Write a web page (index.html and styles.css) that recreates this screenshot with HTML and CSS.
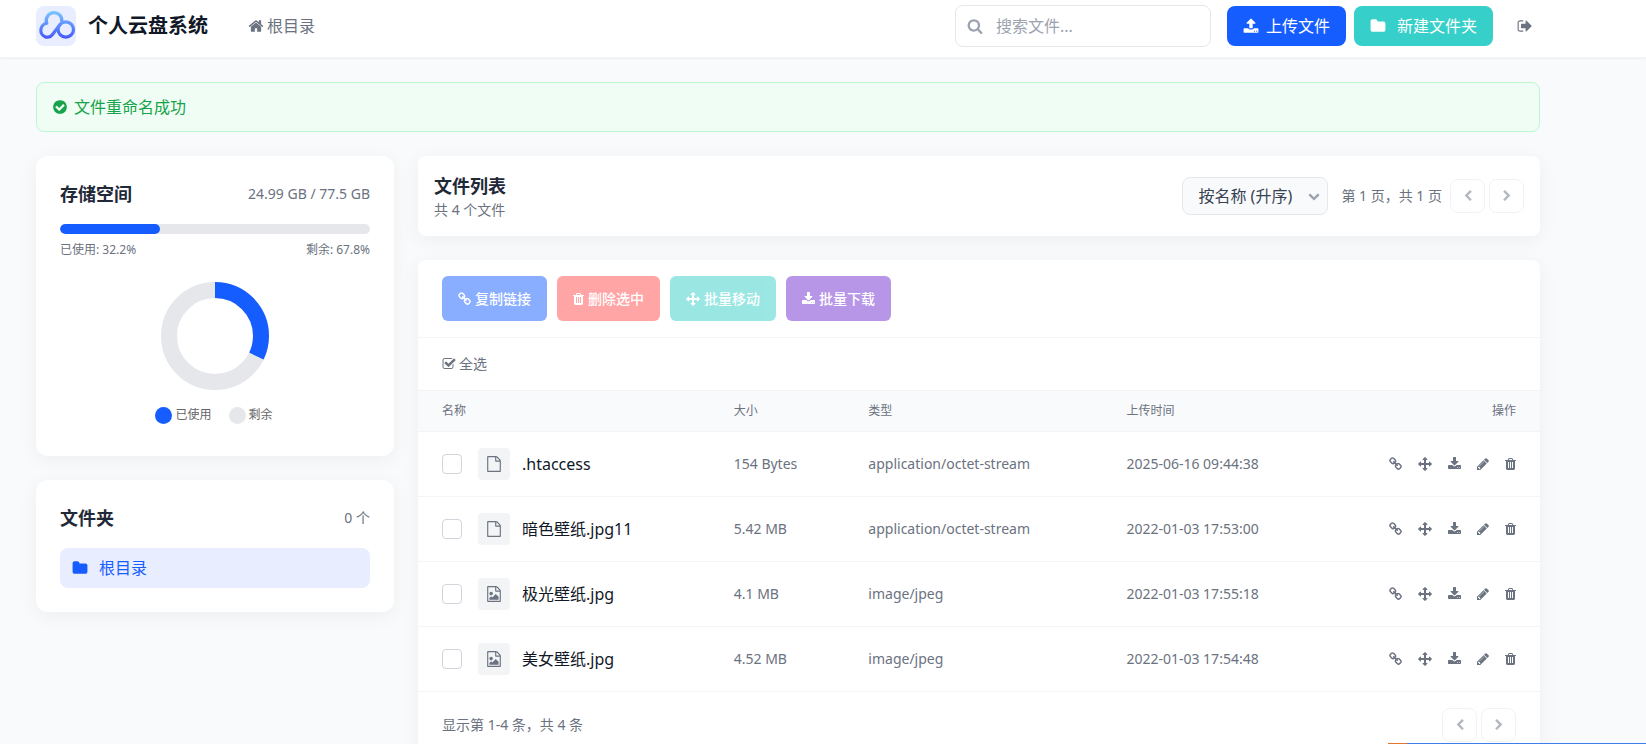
FILE: index.html
```html
<!DOCTYPE html>
<html lang="zh-CN">
<head>
    <meta charset="UTF-8">
    <meta name="viewport" content="width=device-width, initial-scale=1.0">
    <title>个人云盘系统</title>
    <link rel="stylesheet" href="styles.css">
</head>
<body>
    <!-- 图标 -->
    <svg class="sprite" aria-hidden="true">
        <symbol id="home" viewBox="0 0 1792 1792"><path d="M1472 992v480q0 26-19 45t-45 19h-384v-384h-256v384h-384q-26 0-45-19t-19-45v-480q0-1 .5-3t.5-3l575-474 575 474q1 2 1 6zm223-69l-62 74q-8 9-21 11h-3q-13 0-21-7l-692-577-692 577q-12 8-24 7-13-2-21-11l-62-74q-8-10-7-23.500t11-21.500l719-599q32-26 76-26t76 26l244 204v-195q0-14 9-23t23-9h192q14 0 23 9t9 23v408l219 182q10 8 11 21.500t-7 23.500z"/></symbol>
        <symbol id="search" viewBox="0 0 1792 1792"><path d="M1216 832q0-185-131.500-316.500t-316.500-131.500-316.500 131.500-131.500 316.500 131.500 316.500 316.500 131.500 316.500-131.500 131.500-316.500zm512 832q0 52-38 90t-90 38q-54 0-90-38l-343-342q-179 124-399 124-143 0-273.500-55.500t-225-150-150-225-55.500-273.500 55.500-273.500 150-225 225-150 273.500-55.500 273.500 55.500 225 150 150 225 55.500 273.500q0 220-124 399l343 343q37 37 37 90z"/></symbol>
        <symbol id="upload" viewBox="0 0 1792 1792"><path d="M1344 1472q0-26-19-45t-45-19-45 19-19 45 19 45 45 19 45-19 19-45zm256 0q0-26-19-45t-45-19-45 19-19 45 19 45 45 19 45-19 19-45zm128-224v320q0 40-28 68t-68 28h-1472q-40 0-68-28t-28-68v-320q0-40 28-68t68-28h427q21 56 70.500 92t110.500 36h256q61 0 110.500-36t70.500-92h427q40 0 68 28t28 68zm-325-648q-17 40-59 40h-256v448q0 26-19 45t-45 19h-256q-26 0-45-19t-19-45v-448h-256q-42 0-59-40-17-39 14-69l448-448q18-19 45-19t45 19l448 448q31 30 14 69z"/></symbol>
        <symbol id="download" viewBox="0 0 1792 1792" preserveAspectRatio="xMidYMid slice"><path d="M1344 1344q0-26-19-45t-45-19-45 19-19 45 19 45 45 19 45-19 19-45zm256 0q0-26-19-45t-45-19-45 19-19 45 19 45 45 19 45-19 19-45zm128-224v320q0 40-28 68t-68 28h-1472q-40 0-68-28t-28-68v-320q0-40 28-68t68-28h465l135 136q58 56 136 56t136-56l136-136h464q40 0 68 28t28 68zm-325-569q17 41-14 70l-448 448q-18 19-45 19t-45-19l-448-448q-31-29-14-70 17-39 59-39h256v-448q0-26 19-45t45-19h256q26 0 45 19t19 45v448h256q42 0 59 39z"/></symbol>
        <symbol id="folder" viewBox="0 0 1792 1792"><path d="M1728 608v704q0 92-66 158t-158 66h-1216q-92 0-158-66t-66-158v-960q0-92 66-158t158-66h320q92 0 158 66t66 158v32h672q92 0 158 66t66 158z"/></symbol>
        <symbol id="sign-out" viewBox="0 0 1792 1792"><path d="M704 1440q0 4 1 20t.5 26.500-3 23.500-10 19.500-20.500 6.500h-320q-119 0-203.500-84.500t-84.500-203.500v-704q0-119 84.500-203.500t203.500-84.500h320q13 0 22.500 9.500t9.500 22.500q0 4 1 20t.5 26.500-3 23.500-10 19.500-20.500 6.500h-320q-66 0-113 47t-47 113v704q0 66 47 113t113 47h312l11.500 1 11.500 3 8 5.500 7 9 2 13.500zm928-544q0 26-19 45l-544 544q-19 19-45 19t-45-19-19-45v-288h-448q-26 0-45-19t-19-45v-384q0-26 19-45t45-19h448v-288q0-26 19-45t45-19 45 19l544 544q19 19 19 45z"/></symbol>
        <symbol id="check-circle" viewBox="0 0 1792 1792"><path d="M1412 734q0-28-18-46l-91-90q-19-19-45-19t-45 19l-408 407-226-226q-19-19-45-19t-45 19l-91 90q-18 18-18 46 0 27 18 45l362 362q19 19 45 19 27 0 46-19l543-543q18-18 18-45zm252 162q0 209-103 385.500t-279.500 279.500-385.500 103-385.500-103-279.500-279.500-103-385.500 103-385.500 279.500-279.500 385.500-103 385.500 103 279.500 279.500 103 385.500z"/></symbol>
        <symbol id="link" viewBox="0 0 1792 1792" preserveAspectRatio="xMidYMid slice"><path d="M1520 1216q0-40-28-68l-208-208q-28-28-68-28-42 0-72 32 3 3 19 18.500t21.500 21.500 15 19 13 25.500 3.500 27.500q0 40-28 68t-68 28q-15 0-27.500-3.500t-25.500-13-19-15-21.500-21.500-18.500-19q-33 31-33 73 0 40 28 68l206 207q27 27 68 27 40 0 68-26l147-146q28-28 28-67zm-703-705q0-40-28-68l-206-207q-28-28-68-28-39 0-68 27l-147 146q-28 28-28 67 0 40 28 68l208 208q27 27 68 27 42 0 72-31-3-3-19-18.500t-21.500-21.500-15-19-13-25.500-3.500-27.500q0-40 28-68t68-28q15 0 27.500 3.500t25.500 13 19 15 21.500 21.500 18.500 19q33-31 33-73zm895 705q0 120-85 203l-147 146q-83 83-203 83-121 0-204-85l-206-207q-83-83-83-203 0-123 88-209l-88-88q-86 88-208 88-120 0-204-84l-208-208q-84-84-84-204t85-203l147-146q83-83 203-83 121 0 204 85l206 207q83 83 83 203 0 123-88 209l88 88q86-88 208-88 120 0 204 84l208 208q84 84 84 204z"/></symbol>
        <symbol id="trash" viewBox="0 0 1792 1792" preserveAspectRatio="xMidYMid slice"><path d="M704 1376v-704q0-14-9-23t-23-9h-64q-14 0-23 9t-9 23v704q0 14 9 23t23 9h64q14 0 23-9t9-23zm256 0v-704q0-14-9-23t-23-9h-64q-14 0-23 9t-9 23v704q0 14 9 23t23 9h64q14 0 23-9t9-23zm256 0v-704q0-14-9-23t-23-9h-64q-14 0-23 9t-9 23v704q0 14 9 23t23 9h64q14 0 23-9t9-23zm-544-992h448l-48-117q-7-9-17-11h-317q-10 2-17 11zm928 32v64q0 14-9 23t-23 9h-96v948q0 83-47 143.500t-113 60.500h-832q-66 0-113-58.500t-47-141.500v-952h-96q-14 0-23-9t-9-23v-64q0-14 9-23t23-9h309l70-167q15-37 54-63t79-26h320q40 0 79 26t54 63l70 167h309q14 0 23 9t9 23z"/></symbol>
        <symbol id="arrows" viewBox="0 0 1792 1792"><path d="M1792 896q0 26-19 45l-256 256q-19 19-45 19t-45-19-19-45v-128h-384v384h128q26 0 45 19t19 45-19 45l-256 256q-19 19-45 19t-45-19l-256-256q-19-19-19-45t19-45 45-19h128v-384h-384v128q0 26-19 45t-45 19-45-19l-256-256q-19-19-19-45t19-45l256-256q19-19 45-19t45 19 19 45v128h384v-384h-128q-26 0-45-19t-19-45 19-45l256-256q19-19 45-19t45 19l256 256q19 19 19 45t-19 45-45 19h-128v384h384v-128q0-26 19-45t45-19 45 19l256 256q19 19 19 45z"/></symbol>
        <symbol id="pencil" viewBox="0 0 1792 1792" preserveAspectRatio="xMidYMid slice"><path d="M491 1536l91-91-235-235-91 91v107h128v128h107zm523-928q0-22-22-22-10 0-17 7l-542 542q-7 7-7 17 0 22 22 22 10 0 17-7l542-542q7-7 7-17zm-54-192l416 416-832 832h-416v-416zm683 96q0 53-37 90l-166 166-416-416 166-165q36-38 90-38 53 0 91 38l235 234q37 39 37 91z"/></symbol>
        <symbol id="file" viewBox="0 0 1792 1792"><path d="M1596 380q28 28 48 76t20 88v1152q0 40-28 68t-68 28h-1344q-40 0-68-28t-28-68v-1600q0-40 28-68t68-28h896q40 0 88 20t76 48zm-444-244v376h376q-10-29-22-41l-313-313q-12-12-41-22zm384 1528v-1024h-416q-40 0-68-28t-28-68v-416h-768v1536h1280z"/></symbol>
        <symbol id="file-image" viewBox="0 0 1792 1792"><path d="M1596 380q28 28 48 76t20 88v1152q0 40-28 68t-68 28h-1344q-40 0-68-28t-28-68v-1600q0-40 28-68t68-28h896q40 0 88 20t76 48zm-444-244v376h376q-10-29-22-41l-313-313q-12-12-41-22zm384 1528v-1024h-416q-40 0-68-28t-28-68v-416h-768v1536h1280zm-128-448v320h-1024v-192l192-192 128 128 384-384zm-832-192q-80 0-136-56t-56-136 56-136 136-56 136 56 56 136-56 136-136 56z"/></symbol>
        <symbol id="check-square" viewBox="0 0 1792 1792"><path d="M1472 930v318q0 119-84.500 203.500t-203.500 84.500h-832q-119 0-203.500-84.500t-84.500-203.500v-832q0-119 84.500-203.500t203.500-84.500h832q63 0 117 25 15 7 18 23 3 17-9 29l-49 49q-10 10-23 10-3 0-9-2-23-6-45-6h-832q-66 0-113 47t-47 113v832q0 66 47 113t113 47h832q66 0 113-47t47-113v-254q0-13 9-22l64-64q10-10 23-10 6 0 12 3 20 8 20 29zm231-489l-814 814q-24 24-57 24t-57-24l-430-430q-24-24-24-57t24-57l110-110q24-24 57-24t57 24l263 263 647-647q24-24 57-24t57 24l110 110q24 24 24 57t-24 57z"/></symbol>
        <symbol id="chevron-left" viewBox="0 0 1792 1792"><path d="M1427 301l-531 531 531 531q19 19 19 45t-19 45l-166 166q-19 19-45 19t-45-19l-742-742q-19-19-19-45t19-45l742-742q19-19 45-19t45 19l166 166q19 19 19 45t-19 45z"/></symbol>
        <symbol id="chevron-right" viewBox="0 0 1792 1792"><path d="M1363 877l-742 742q-19 19-45 19t-45-19l-166-166q-19-19-19-45t19-45l531-531-531-531q-19-19-19-45t19-45l166-166q19-19 45-19t45 19l742 742q19 19 19 45t-19 45z"/></symbol>
        <symbol id="chevron-down" viewBox="0 0 1792 1792"><path d="M1683 808l-742 741q-19 19-45 19t-45-19l-742-741q-19-19-19-45.500t19-45.500l166-165q19-19 45-19t45 19l531 531 531-531q19-19 45-19t45 19l166 165q19 19 19 45.500t-19 45.500z"/></symbol>
    </svg>

    <header class="header">
        <div class="container header-inner">
            <div class="brand">
                <svg class="logo" viewBox="0 0 40 40" aria-hidden="true">
                    <defs>
                        <linearGradient id="logo-fill" gradientUnits="userSpaceOnUse" x1="0" y1="5" x2="0" y2="33">
                            <stop offset="0" stop-color="#7cc8ff"/>
                            <stop offset="1" stop-color="#4355f9"/>
                        </linearGradient>
                    </defs>
                    <g fill="none" stroke="url(#logo-fill)" stroke-width="3.200" stroke-linecap="round" stroke-linejoin="round">
                        <path d="M24 18.500L16.500 28.500Q14.500 31.200 12 31.200H10A7.200 7.200 0 0 1 10.800 17.200A7.800 7.800 0 1 1 25.800 15.500"/>
                        <circle cx="29.800" cy="23.500" r="7.700"/>
                    </g>
                </svg>
                <h1>个人云盘系统</h1>
            </div>
            <nav class="nav">
                <a href="#"><svg class="icon"><use href="#home"/></svg>根目录</a>
            </nav>
            <div class="header-actions">
                <div class="search">
                    <svg class="icon"><use href="#search"/></svg>
                    <input type="text" placeholder="搜索文件..." aria-label="搜索文件">
                </div>
                <button class="btn btn-upload"><svg class="icon"><use href="#upload"/></svg>上传文件</button>
                <button class="btn btn-folder"><svg class="icon"><use href="#folder"/></svg>新建文件夹</button>
                <a class="logout" href="#" aria-label="退出"><svg class="icon"><use href="#sign-out"/></svg></a>
            </div>
        </div>
    </header>

    <main class="container">
        <div class="alert"><svg class="icon"><use href="#check-circle"/></svg>文件重命名成功</div>

        <div class="layout">
            <aside class="sidebar">
                <section class="card side-card">
                    <div class="card-head">
                        <h2>存储空间</h2>
                        <span>24.99 GB / 77.5 GB</span>
                    </div>
                    <div class="progress"><div class="progress-bar" style="width: 32.2%"></div></div>
                    <div class="usage">
                        <span>已使用: 32.2%</span>
                        <span>剩余: 67.8%</span>
                    </div>
                    <svg class="donut" viewBox="0 0 108 108" aria-hidden="true">
                        <circle cx="54" cy="54" r="46" fill="none" stroke="#e5e7eb" stroke-width="16"/>
                        <circle cx="54" cy="54" r="46" fill="none" stroke="#165dff" stroke-width="16" pathLength="100" stroke-dasharray="32.2 67.8" transform="rotate(-90 54 54)"/>
                    </svg>
                    <div class="legend">
                        <span><i class="dot dot-used"></i>已使用</span>
                        <span><i class="dot dot-free"></i>剩余</span>
                    </div>
                </section>

                <section class="card side-card">
                    <div class="card-head">
                        <h2>文件夹</h2>
                        <span>0 个</span>
                    </div>
                    <a class="folder-item" href="#"><svg class="icon"><use href="#folder"/></svg>根目录</a>
                </section>
            </aside>

            <div class="content">
                <section class="card list-head">
                    <div>
                        <h2>文件列表</h2>
                        <p>共 4 个文件</p>
                    </div>
                    <div class="list-tools">
                        <div class="sort">
                            <select aria-label="排序方式">
                                <option>按名称 (升序)</option>
                                <option>按名称 (降序)</option>
                            </select>
                            <svg class="icon"><use href="#chevron-down"/></svg>
                        </div>
                        <span class="page-info">第 1 页，共 1 页</span>
                        <div class="pager">
                            <button disabled aria-label="上一页"><svg class="icon"><use href="#chevron-left"/></svg></button>
                            <button disabled aria-label="下一页"><svg class="icon"><use href="#chevron-right"/></svg></button>
                        </div>
                    </div>
                </section>

                <section class="card files">
                    <div class="toolbar">
                        <button class="batch batch-copy" disabled><svg class="icon i-13"><use href="#link"/></svg>复制链接</button>
                        <button class="batch batch-delete" disabled><svg class="icon i-11"><use href="#trash"/></svg>删除选中</button>
                        <button class="batch batch-move" disabled><svg class="icon"><use href="#arrows"/></svg>批量移动</button>
                        <button class="batch batch-download" disabled><svg class="icon i-13"><use href="#download"/></svg>批量下载</button>
                    </div>
                    <div class="select-all">
                        <button><svg class="icon"><use href="#check-square"/></svg>全选</button>
                    </div>
                    <table class="file-table">
                        <thead>
                            <tr>
                                <th class="col-name">名称</th>
                                <th class="col-size">大小</th>
                                <th class="col-type">类型</th>
                                <th>上传时间</th>
                                <th class="col-actions">操作</th>
                            </tr>
                        </thead>
                        <tbody>
                            <tr>
                                <td>
                                    <label class="file-name">
                                        <input type="checkbox">
                                        <span class="file-icon"><svg class="icon"><use href="#file"/></svg></span>
                                        .htaccess
                                    </label>
                                </td>
                                <td>154 Bytes</td>
                                <td>application/octet-stream</td>
                                <td>2025-06-16 09:44:38</td>
                                <td>
                                    <div class="row-actions">
                                        <button aria-label="复制链接"><svg class="icon i-13"><use href="#link"/></svg></button>
                                        <button aria-label="移动"><svg class="icon"><use href="#arrows"/></svg></button>
                                        <button aria-label="下载"><svg class="icon i-13"><use href="#download"/></svg></button>
                                        <button aria-label="重命名"><svg class="icon i-12"><use href="#pencil"/></svg></button>
                                        <button aria-label="删除"><svg class="icon i-11"><use href="#trash"/></svg></button>
                                    </div>
                                </td>
                            </tr>
                            <tr>
                                <td>
                                    <label class="file-name">
                                        <input type="checkbox">
                                        <span class="file-icon"><svg class="icon"><use href="#file"/></svg></span>
                                        暗色壁纸.jpg11
                                    </label>
                                </td>
                                <td>5.42 MB</td>
                                <td>application/octet-stream</td>
                                <td>2022-01-03 17:53:00</td>
                                <td>
                                    <div class="row-actions">
                                        <button aria-label="复制链接"><svg class="icon i-13"><use href="#link"/></svg></button>
                                        <button aria-label="移动"><svg class="icon"><use href="#arrows"/></svg></button>
                                        <button aria-label="下载"><svg class="icon i-13"><use href="#download"/></svg></button>
                                        <button aria-label="重命名"><svg class="icon i-12"><use href="#pencil"/></svg></button>
                                        <button aria-label="删除"><svg class="icon i-11"><use href="#trash"/></svg></button>
                                    </div>
                                </td>
                            </tr>
                            <tr>
                                <td>
                                    <label class="file-name">
                                        <input type="checkbox">
                                        <span class="file-icon"><svg class="icon"><use href="#file-image"/></svg></span>
                                        极光壁纸.jpg
                                    </label>
                                </td>
                                <td>4.1 MB</td>
                                <td>image/jpeg</td>
                                <td>2022-01-03 17:55:18</td>
                                <td>
                                    <div class="row-actions">
                                        <button aria-label="复制链接"><svg class="icon i-13"><use href="#link"/></svg></button>
                                        <button aria-label="移动"><svg class="icon"><use href="#arrows"/></svg></button>
                                        <button aria-label="下载"><svg class="icon i-13"><use href="#download"/></svg></button>
                                        <button aria-label="重命名"><svg class="icon i-12"><use href="#pencil"/></svg></button>
                                        <button aria-label="删除"><svg class="icon i-11"><use href="#trash"/></svg></button>
                                    </div>
                                </td>
                            </tr>
                            <tr>
                                <td>
                                    <label class="file-name">
                                        <input type="checkbox">
                                        <span class="file-icon"><svg class="icon"><use href="#file-image"/></svg></span>
                                        美女壁纸.jpg
                                    </label>
                                </td>
                                <td>4.52 MB</td>
                                <td>image/jpeg</td>
                                <td>2022-01-03 17:54:48</td>
                                <td>
                                    <div class="row-actions">
                                        <button aria-label="复制链接"><svg class="icon i-13"><use href="#link"/></svg></button>
                                        <button aria-label="移动"><svg class="icon"><use href="#arrows"/></svg></button>
                                        <button aria-label="下载"><svg class="icon i-13"><use href="#download"/></svg></button>
                                        <button aria-label="重命名"><svg class="icon i-12"><use href="#pencil"/></svg></button>
                                        <button aria-label="删除"><svg class="icon i-11"><use href="#trash"/></svg></button>
                                    </div>
                                </td>
                            </tr>
                        </tbody>
                    </table>
                    <div class="list-foot">
                        <span>显示第 1-4 条，共 4 条</span>
                        <div class="pager">
                            <button disabled aria-label="上一页"><svg class="icon"><use href="#chevron-left"/></svg></button>
                            <button disabled aria-label="下一页"><svg class="icon"><use href="#chevron-right"/></svg></button>
                        </div>
                    </div>
                </section>
            </div>
        </div>
    </main>

    <div class="dock-edge"></div>
</body>
</html>
```
FILE: styles.css
```css
* {
    box-sizing: border-box;
}

body {
    margin: 0;
    padding-bottom: 24px;
    background: #f9fafc;
    color: #111827;
    font-family: "Noto Sans", "Noto Sans CJK SC", sans-serif;
    font-size: 16px;
    line-height: 24px;
}

h1, h2, p {
    margin: 0;
}

h2 {
    font-size: 18px;
    line-height: 28px;
    font-weight: 700;
    color: #1f2937;
}

a {
    color: inherit;
    text-decoration: none;
}

button, input, select {
    font: inherit;
    color: inherit;
}

button {
    padding: 0;
    border: none;
    background: none;
    cursor: pointer;
}

button:disabled {
    opacity: 0.5;
    cursor: not-allowed;
}

.sprite {
    display: none;
}

.icon {
    width: 1em;
    height: 1em;
    flex-shrink: 0;
    fill: currentColor;
}

/* narrow glyphs in the 14px rows */
.i-11 {
    width: 11px;
}

.i-12 {
    width: 12px;
}

.i-13 {
    width: 13px;
}

.header {
    padding-right: 70px;
    background: #fff;
    border-bottom: 1px solid #f3f4f6;
    box-shadow: 0 1px 2px rgba(0, 0, 0, 0.05);
}

.header-inner {
    max-width: 1536px;
    margin: 0 auto;
    padding: 5px 16px 10px;
    display: flex;
    align-items: center;
}

.brand {
    display: flex;
    align-items: center;
    gap: 12px;
}

.brand h1 {
    font-size: 20px;
    line-height: 28px;
    font-weight: 700;
}

.logo {
    width: 40px;
    height: 40px;
    border-radius: 8px;
    background: #e8eeff;
}

.nav {
    margin-left: 40px;
    color: #6b7280;
}

.nav a {
    display: flex;
    align-items: center;
    gap: 3px;
}

.header-actions {
    margin-left: auto;
    display: flex;
    align-items: center;
}

.search {
    position: relative;
    display: flex;
    align-items: center;
    margin-right: 16px;
}

.search input {
    width: 256px;
    height: 42px;
    padding: 0 16px 0 40px;
    border: 1px solid #e5e7eb;
    border-radius: 8px;
    background: #fff;
    outline: none;
}

.search input::placeholder {
    color: #9ca3af;
    opacity: 1;
}

.search .icon {
    position: absolute;
    left: 12px;
    color: #9ca3af;
}

.btn {
    display: flex;
    align-items: center;
    height: 40px;
    padding: 0 16px;
    border-radius: 8px;
    color: #fff;
}

.btn-upload {
    gap: 7px;
    margin-right: 8px;
    background: #165dff;
}

.btn-folder {
    gap: 11px;
    background: #36cfc9;
}

.logout {
    display: flex;
    margin-left: 16px;
    padding: 8px 7px 8px 8px;
    color: #6b7280;
}

main.container {
    max-width: 1606px;
    margin: 0 auto;
    padding: 24px 86px 0 16px;
}

.alert {
    display: flex;
    align-items: center;
    gap: 6px;
    margin-bottom: 24px;
    padding: 12px 15px;
    border: 1px solid #bbf7d0;
    border-radius: 8px;
    background: #f0fdf4;
    color: #16a34a;
}

.layout {
    display: grid;
    grid-template-columns: repeat(4, minmax(0, 1fr));
    gap: 24px;
    align-items: start;
}

.sidebar, .content {
    display: flex;
    flex-direction: column;
    gap: 24px;
}

.content {
    grid-column: span 3;
}

.card {
    border-radius: 8px;
    background: #fff;
    box-shadow: 0 4px 20px rgba(0, 0, 0, 0.05);
}

.side-card {
    padding: 24px;
    border-radius: 12px;
}

.card-head {
    display: flex;
    align-items: center;
    justify-content: space-between;
    margin-bottom: 16px;
}

.card-head span {
    font-size: 14px;
    color: #6b7280;
}

.progress {
    height: 10px;
    border-radius: 5px;
    background: #e5e7eb;
    overflow: hidden;
}

.progress-bar {
    height: 100%;
    border-radius: 5px;
    background: #165dff;
}

.usage {
    display: flex;
    justify-content: space-between;
    margin-top: 8px;
    font-size: 12px;
    line-height: 16px;
    color: #6b7280;
}

.donut {
    display: block;
    width: 108px;
    height: 108px;
    margin: 24px auto 16px;
}

.legend {
    display: flex;
    justify-content: center;
    gap: 17px;
    padding: 0 2px 8px 0;
    font-size: 12px;
    line-height: 18px;
    color: #666;
}

.legend span {
    display: flex;
    align-items: center;
    gap: 3px;
}

.dot {
    width: 17px;
    height: 17px;
    border-radius: 50%;
}

.dot-used {
    background: #165dff;
}

.dot-free {
    background: #e5e7eb;
}

.folder-item {
    display: flex;
    align-items: center;
    gap: 11px;
    padding: 8px 12px;
    border-radius: 8px;
    background: #e8eeff;
    color: #165dff;
}

.list-head {
    display: flex;
    align-items: center;
    justify-content: space-between;
    padding: 16px;
}

.list-head p {
    font-size: 14px;
    line-height: 20px;
    color: #6b7280;
}

.list-tools {
    display: flex;
    align-items: center;
}

.sort {
    position: relative;
    display: flex;
    align-items: center;
    margin-right: 13px;
    color: #374151;
}

.sort select {
    width: 146px;
    height: 38px;
    padding: 0 15px;
    border: 1px solid #e5e7eb;
    border-radius: 8px;
    background: #f9fafc;
    appearance: none;
}

.sort .icon {
    position: absolute;
    right: 8px;
    width: 12px;
    height: 12px;
    color: #9ca3af;
    pointer-events: none;
}

.page-info {
    margin-right: 8px;
    font-size: 14px;
    color: #6b7280;
}

.pager {
    display: flex;
    gap: 4px;
}

.pager button {
    display: flex;
    align-items: center;
    justify-content: center;
    width: 35px;
    height: 34px;
    border: 1px solid #e5e7eb;
    border-radius: 8px;
    font-size: 12px;
    color: #6b7280;
}

.toolbar {
    display: flex;
    gap: 10px;
    padding: 16px 24px;
    border-bottom: 1px solid #f3f4f6;
}

.batch {
    display: flex;
    align-items: center;
    gap: 4px;
    height: 45px;
    padding: 0 16px;
    border-radius: 6px;
    font-size: 14px;
    font-weight: 500;
    color: #fff;
}

.batch-copy {
    background: #165dff;
}

.batch-delete {
    background: #ff4d4f;
}

.batch-move {
    background: #36cfc9;
}

.batch-download {
    background: #722ed1;
}

.select-all {
    padding: 16px 24px;
    border-bottom: 1px solid #f3f4f6;
}

.select-all button {
    display: flex;
    align-items: center;
    gap: 3px;
    font-size: 14px;
    line-height: 20px;
    color: #6b7280;
}

.file-table {
    width: 100%;
    table-layout: fixed;
    border-collapse: separate;
    border-spacing: 0;
    font-size: 14px;
    line-height: 20px;
    color: #6b7280;
}

.file-table th {
    padding: 12px 24px;
    border-bottom: 1px solid #f3f4f6;
    background: #f9fafc;
    font-size: 12px;
    line-height: 16px;
    font-weight: 400;
    text-align: left;
}

.file-table td {
    padding: 16px 24px;
    border-bottom: 1px solid #f3f4f6;
    white-space: nowrap;
}

.file-table .col-name {
    width: 26%;
}

.file-table .col-size {
    width: 12%;
}

.file-table .col-type {
    width: 23%;
}

.file-table .col-actions {
    text-align: right;
}

.file-name {
    display: flex;
    align-items: center;
    font-size: 16px;
    color: #111827;
}

.file-name input {
    width: 20px;
    height: 20px;
    margin: 0 16px 0 0;
    border: 1px solid #d1d5db;
    border-radius: 4px;
    background: #fff;
    appearance: none;
}

.file-name input:checked {
    border-color: #165dff;
    background: #165dff;
}

.file-icon {
    display: flex;
    align-items: center;
    justify-content: center;
    width: 32px;
    height: 32px;
    margin-right: 12px;
    border-radius: 4px;
    background: #f3f4f6;
    color: #6b7280;
}

.row-actions {
    display: flex;
    justify-content: flex-end;
    gap: 16px;
}

.row-actions button {
    display: flex;
}

.list-foot {
    display: flex;
    align-items: center;
    justify-content: space-between;
    padding: 16px 24px;
    font-size: 14px;
    color: #6b7280;
}

/* top edge of the dock, pinned to the bottom right */
.dock-edge {
    position: fixed;
    right: 0;
    bottom: 0;
    width: 258px;
    height: 1px;
    background: linear-gradient(to right, #e8732c 19px, #3f7ee8 19px);
}

@media (max-width: 1000px) {
    .header, main.container {
        padding-right: 16px;
    }

    .header-inner {
        flex-wrap: wrap;
        gap: 12px;
    }

    .layout {
        display: block;
    }

    .content {
        margin-top: 24px;
        overflow-x: auto;
    }
}
```
